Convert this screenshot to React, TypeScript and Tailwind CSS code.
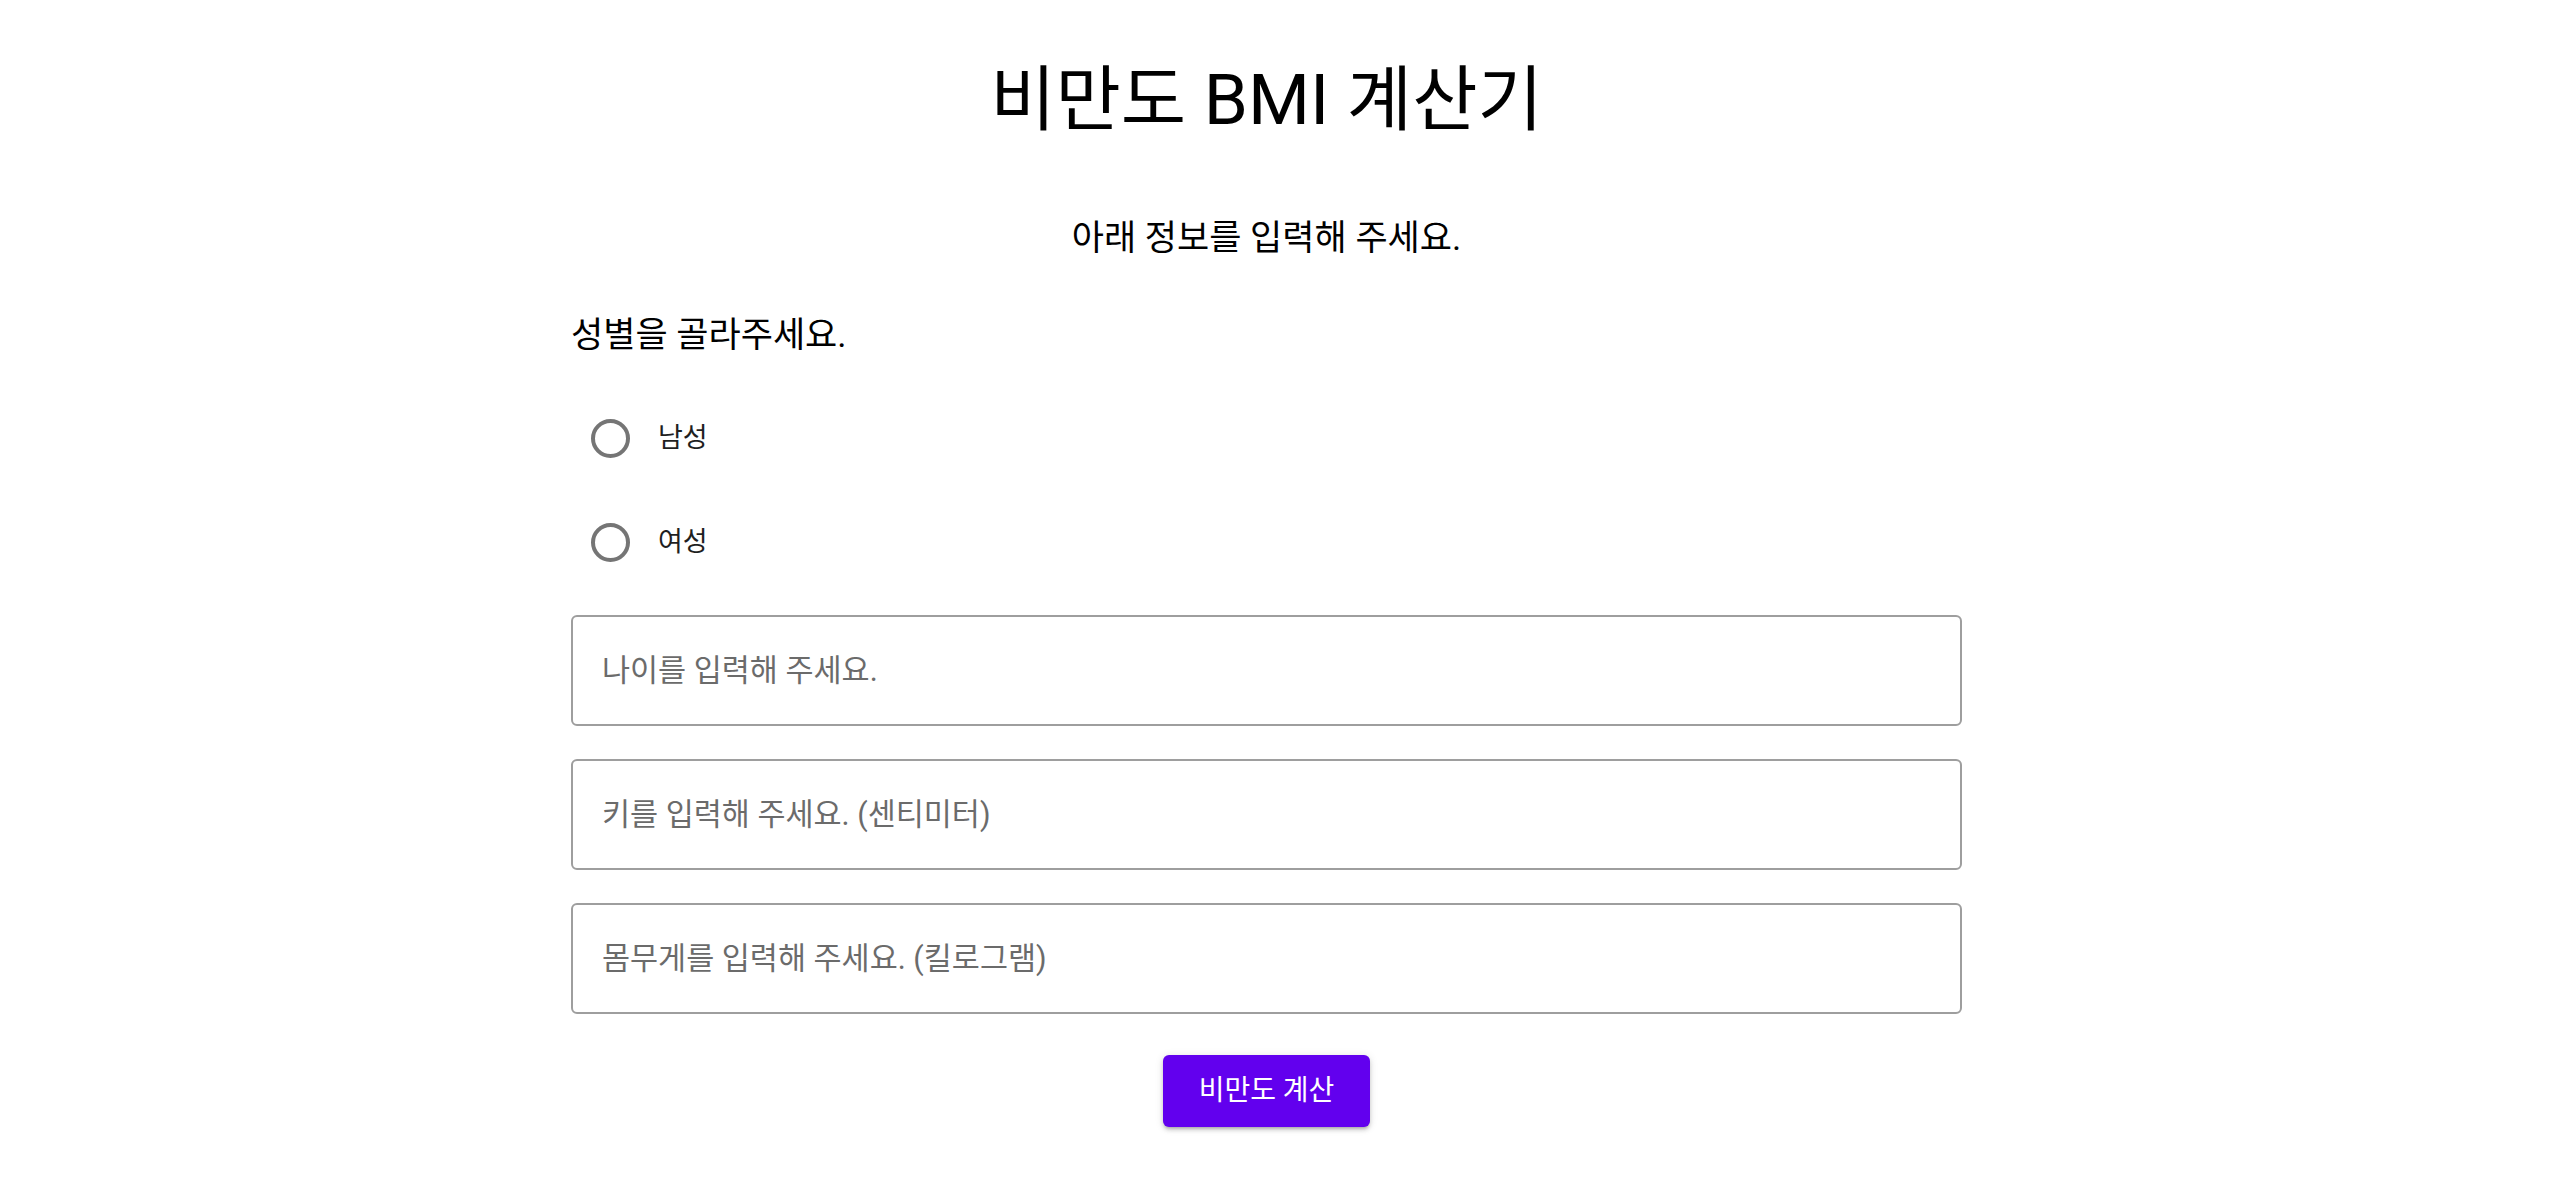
import { useState } from "react";

const fields = [
  { name: "age", placeholder: "나이를 입력해 주세요." },
  { name: "height", placeholder: "키를 입력해 주세요. (센티미터)" },
  { name: "weight", placeholder: "몸무게를 입력해 주세요. (킬로그램)" },
];

const genders = [
  { value: "male", label: "남성" },
  { value: "female", label: "여성" },
];

export default function App() {
  const [gender, setGender] = useState("");

  return (
    <div
      className="min-h-screen bg-white text-black flex justify-center pr-[25px]"
      style={{ fontFamily: 'Roboto, "Noto Sans CJK KR", sans-serif' }}
    >
      <main className="w-[1391px] pt-[40px] flex flex-col">
        <h1 className="h-[118px] flex items-center justify-center text-[71px] leading-none font-normal">
          비만도 BMI 계산기
        </h1>
        <p className="mt-[55px] h-[50px] flex items-center justify-center text-[35px] leading-none">
          아래 정보를 입력해 주세요.
        </p>

        <p className="mt-[47px] h-[50px] flex items-center text-[35px] leading-none">
          성별을 골라주세요.
        </p>

        <div className="mt-[38px] flex flex-col gap-[24px]">
          {genders.map((g) => (
            <label
              key={g.value}
              className="h-[80px] flex items-center gap-[28px] pl-[20px] cursor-pointer"
              onClick={() => setGender(g.value)}
            >
              <span className="w-[39px] h-[39px] rounded-full border-[4px] border-[#757575] flex items-center justify-center">
                {gender === g.value && (
                  <span className="w-[19px] h-[19px] rounded-full bg-[#6200ee]" />
                )}
              </span>
              <span className="text-[27px] leading-none text-[#1f1f1f]">{g.label}</span>
            </label>
          ))}
        </div>

        <div className="mt-[33px] flex flex-col gap-[33px]">
          {fields.map((f) => (
            <input
              key={f.name}
              name={f.name}
              type="text"
              placeholder={f.placeholder}
              className="h-[111px] w-full rounded-[6px] border-2 border-[#9e9e9e] px-[29px] text-[30.5px] outline-none placeholder:text-[#6b6b6b]"
            />
          ))}
        </div>

        <div className="mt-[41px] flex justify-center">
          <button
            type="button"
            className="w-[207px] h-[72px] rounded-[6px] bg-[#6200ee] text-white text-[28px] leading-none shadow-[0_3px_3px_-2px_rgba(0,0,0,0.2),0_3px_4px_0_rgba(0,0,0,0.14),0_1px_8px_0_rgba(0,0,0,0.12)]"
          >
            비만도 계산
          </button>
        </div>
      </main>
    </div>
  );
}
